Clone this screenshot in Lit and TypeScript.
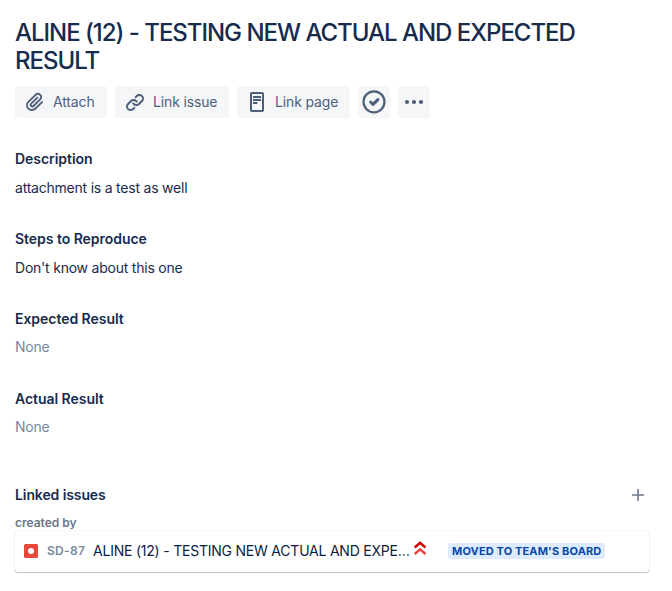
import { LitElement, html, css, svg } from 'lit'
import { customElement, property } from 'lit/decorators.js'

const icons = {
  attach: svg`<path fill="currentColor" d="M11.643 17.965c-1.53 1.495-4.016 1.496-5.542.004a3.773 3.773 0 0 1 .002-5.412l7.147-6.985a2.316 2.316 0 0 1 3.233-.003c.893.873.895 2.282.004 3.153l-6.703 6.55a.653.653 0 0 1-.914-.008.62.62 0 0 1 0-.902l6.229-6.087a.941.941 0 0 0 0-1.353.995.995 0 0 0-1.384 0l-6.23 6.087a2.502 2.502 0 0 0 0 3.607 2.643 2.643 0 0 0 3.683.009l6.703-6.55a4.074 4.074 0 0 0-.003-5.859 4.306 4.306 0 0 0-6.002.003l-7.148 6.985a5.655 5.655 0 0 0-.001 8.118c2.29 2.239 6.015 2.238 8.31-.005l6.686-6.533a.941.941 0 0 0 0-1.353.995.995 0 0 0-1.384 0l-6.686 6.534z"/>`,
  link: svg`<g fill="currentColor"><path d="M12.856 5.457l-.937.92a1.002 1.002 0 0 0 0 1.437 1.047 1.047 0 0 0 1.463 0l.984-.966c.967-.95 2.542-1.135 3.602-.288a2.54 2.54 0 0 1 .203 3.81l-2.903 2.852a2.646 2.646 0 0 1-3.696 0l-1.11-1.09L9 13.57l1.108 1.089c1.822 1.788 4.802 1.788 6.622 0l2.905-2.852a4.558 4.558 0 0 0-.357-6.82c-1.893-1.517-4.695-1.226-6.422.47"/><path d="M11.144 19.543l.937-.92a1.002 1.002 0 0 0 0-1.437 1.047 1.047 0 0 0-1.462 0l-.985.966c-.967.95-2.542 1.135-3.602.288a2.54 2.54 0 0 1-.203-3.81l2.903-2.852a2.646 2.646 0 0 1 3.696 0l1.11 1.09L15 11.43l-1.108-1.089c-1.822-1.788-4.802-1.788-6.622 0l-2.905 2.852a4.558 4.558 0 0 0 .357 6.82c1.893 1.517 4.695 1.226 6.422-.47"/></g>`,
  page: svg`<g fill="none" stroke="currentColor"><rect x="6" y="3" width="12" height="18" rx="0.8" stroke-width="2"/><path d="M8 7h8M8 10h8M8 13h4.3" stroke-width="1.9"/></g>`,
  check: svg`<g fill="none" stroke="currentColor"><circle cx="12" cy="11.8" r="10.5" stroke-width="2.2"/><path d="M8.6 12l2.4 2.3 4.9-4.7" stroke-width="3" stroke-linecap="round" stroke-linejoin="round"/></g>`,
  more: svg`<g fill="currentColor"><circle cx="5" cy="12" r="2.1"/><circle cx="12" cy="12" r="2.1"/><circle cx="19" cy="12" r="2.1"/></g>`,
  plus: svg`<path d="M12 6v12M6 12h12" fill="none" stroke="currentColor" stroke-width="1.6"/>`,
}

@customElement('action-button')
class ActionButton extends LitElement {
  @property() icon: keyof typeof icons = 'more'
  @property() label = ''

  static styles = css`
    :host {
      display: block;
      flex: none;
    }

    .button {
      box-sizing: border-box;
      display: flex;
      align-items: center;
      width: 100%;
      height: 32px;
      padding: 0 4px;
      border: 0;
      border-radius: 3px;
      background: #f5f6f8;
      color: #505f79;
      font: 400 14px/20px Inter, sans-serif;
      letter-spacing: -0.15px;
      white-space: nowrap;
    }

    .labelled {
      padding: 0 0 0 8px;
      gap: 6px;
    }

    .icon {
      flex: none;
      width: 24px;
      height: 24px;
      overflow: visible;
    }
  `

  render() {
    return html`
      <button class="button ${this.label ? 'labelled' : ''}">
        <svg class="icon" viewBox="0 0 24 24">${icons[this.icon]}</svg>
        ${this.label ? html`<span>${this.label}</span>` : ''}
      </button>
    `
  }
}

@customElement('issue-field')
class IssueField extends LitElement {
  @property() label = ''
  @property() value = ''

  static styles = css`
    :host {
      display: block;
      height: 80px;
      font: 400 14px/20px Inter, sans-serif;
      color: #172b4d;
    }

    .label {
      margin: 0;
      font-size: 14px;
      font-weight: 600;
      letter-spacing: -0.04px;
    }

    .value {
      margin: 9px 0 0;
      letter-spacing: -0.22px;
    }

    .empty {
      margin-top: 8px;
      color: #7a869a;
    }
  `

  render() {
    return html`
      <h2 class="label">${this.label}</h2>
      <p class="value ${this.value ? '' : 'empty'}">${this.value || 'None'}</p>
    `
  }
}

@customElement('linked-issue')
class LinkedIssue extends LitElement {
  @property() key = ''
  @property() summary = ''
  @property() status = ''

  static styles = css`
    .card {
      box-sizing: border-box;
      display: flex;
      align-items: center;
      height: 41px;
      padding: 0 44px 1px 9px;
      border-radius: 3px;
      background: #fff;
      box-shadow: 0 1px 1px rgba(9, 30, 66, 0.25), 0 0 1px rgba(9, 30, 66, 0.31);
      font: 400 14px/20px Inter, sans-serif;
      color: #091e42;
    }

    .type {
      flex: none;
      width: 14px;
      height: 14px;
    }

    .key {
      flex: none;
      width: 46px;
      margin-left: 9px;
      font-size: 12px;
      font-weight: 600;
      letter-spacing: 0.3px;
      color: #7a869a;
    }

    .summary {
      flex: none;
      width: 318px;
      white-space: nowrap;
      letter-spacing: -0.22px;
    }

    .priority {
      flex: none;
      width: 14px;
      height: 16px;
      margin: -4px 0 0 2px;
    }

    .status {
      margin-left: auto;
      box-sizing: border-box;
      width: 157px;
      height: 16px;
      padding: 0 4px;
      border-radius: 3px;
      background: #deebff;
      color: #0747a6;
      font-size: 11px;
      font-weight: 700;
      line-height: 16px;
      letter-spacing: 0.14px;
      white-space: nowrap;
    }
  `

  render() {
    return html`
      <div class="card">
        <svg class="type" viewBox="0 0 14 14">
          <rect width="14" height="14" rx="1.5" fill="#e5493a" />
          <circle cx="7" cy="7" r="3" fill="#fff" />
        </svg>
        <span class="key">${this.key}</span>
        <span class="summary">${this.summary}</span>
        <svg class="priority" viewBox="0 0 14 16" fill="none" stroke-width="2.5">
          <path d="M1.7 6.5l5.4-4.6 5.4 4.6" stroke="#ce0000" />
          <path d="M1.7 13l5.4-4.6 5.4 4.6" stroke="#ea4444" />
        </svg>
        <span class="status">${this.status}</span>
      </div>
    `
  }
}

@customElement('app-root')
class AppRoot extends LitElement {
  static styles = css`
    :host {
      display: block;
      box-sizing: border-box;
      height: 591px;
      padding: 18px 23px 0 15px;
      background: #fff;
      color: #172b4d;
      font-family: Inter, sans-serif;
    }

    .title {
      margin: 0;
      padding-top: 1px;
      font-size: 24px;
      font-weight: 500;
      line-height: 28px;
      letter-spacing: -1.02px;
    }

    .actions {
      display: flex;
      gap: 8px;
      margin: 11px 0 31px;
    }

    .attach {
      width: 92px;
    }

    .link-issue {
      width: 114px;
    }

    .link-page {
      width: 113px;
    }

    .square {
      width: 32px;
    }

    .linked-header {
      display: flex;
      justify-content: space-between;
      align-items: center;
      height: 24px;
      margin: 14px -1px 0 0;
    }

    .linked-title {
      margin: 0;
      font-size: 14px;
      font-weight: 600;
      line-height: 20px;
      letter-spacing: -0.1px;
    }

    .add {
      width: 24px;
      height: 24px;
      color: #6b778c;
    }

    .relation {
      margin: 8px 0 0;
      font-size: 12px;
      font-weight: 600;
      line-height: 16px;
      color: #6b778c;
    }
  `

  render() {
    return html`
      <h1 class="title">ALINE (12) - TESTING NEW ACTUAL AND EXPECTED<br />RESULT</h1>
      <div class="actions">
        <action-button class="attach" icon="attach" label="Attach"></action-button>
        <action-button class="link-issue" icon="link" label="Link issue"></action-button>
        <action-button class="link-page" icon="page" label="Link page"></action-button>
        <action-button class="square" icon="check"></action-button>
        <action-button class="square" icon="more"></action-button>
      </div>
      <issue-field label="Description" value="attachment is a test as well"></issue-field>
      <issue-field label="Steps to Reproduce" value="Don't know about this one"></issue-field>
      <issue-field label="Expected Result"></issue-field>
      <issue-field label="Actual Result"></issue-field>
      <div class="linked-header">
        <h2 class="linked-title">Linked issues</h2>
        <svg class="add" viewBox="0 0 24 24">${icons.plus}</svg>
      </div>
      <p class="relation">created by</p>
      <linked-issue
        key="SD-87"
        summary="ALINE (12) - TESTING NEW ACTUAL AND EXPE…"
        status="MOVED TO TEAM'S BOARD"
      ></linked-issue>
    `
  }
}
